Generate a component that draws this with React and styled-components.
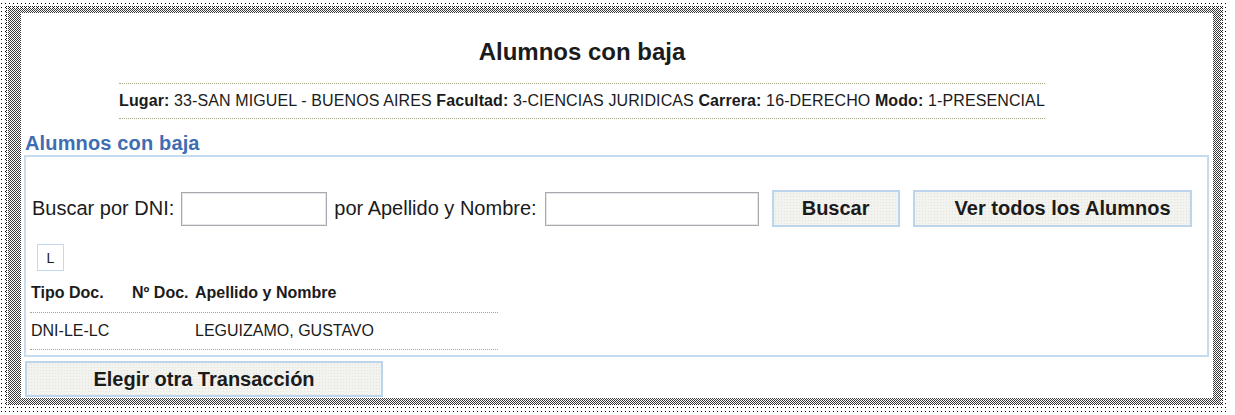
import React from "react";
import styled, { createGlobalStyle } from "styled-components";

const Global = createGlobalStyle`
  html, body { margin: 0; padding: 0; background: #fff; }
  body { font-family: "Liberation Sans", Arial, sans-serif; color: #1b1b1b; }
  * { box-sizing: border-box; }
`;

const dot = (c) => `conic-gradient(at 1px 1px, transparent 75%, ${c} 0)`;

const Page = styled.div`
  width: 1235px;
  height: 415px;
  background: #fff;
  overflow: hidden;
  padding: 3px 0 0 1px;
`;

const SparseFrame = styled.div`
  width: 1226px;
  height: 411px;
  padding: 3px 4px 8px 5px;
  background: ${dot("#000")} 0 0 / 4px 4px;
`;

const MediumFrame = styled.div`
  width: 100%;
  height: 100%;
  padding: 2px;
  background: ${dot("#222")} 0 0 / 2px 2px;
`;

const DenseFrame = styled.div`
  width: 100%;
  height: 100%;
  padding: 5px 8px 6px 13px;
  background: ${dot("#3a3a3a")} 0 0 / 2px 2px, ${dot("#3a3a3a")} 1px 1px / 2px 2px, #fff;
`;

const Content = styled.div`
  width: 100%;
  height: 100%;
  background: #fff;
  display: flex;
  flex-direction: column;
  align-items: flex-start;
`;

const Header = styled.div`
  margin-left: 98px;
  width: 926px;
`;

const Title = styled.h1`
  margin: 25px 0 0;
  font-size: 24px;
  line-height: 28px;
  font-weight: bold;
  text-align: center;
`;

const InfoBar = styled.div`
  margin-top: 17px;
  border-top: 1px dotted #a8a887;
  border-bottom: 1px dotted #a8a887;
  padding: 7px 0 7px;
  font-size: 16px;
  line-height: 20px;
  letter-spacing: 0.11px;
  text-align: center;
  white-space: nowrap;
`;

const Key = styled.b`
  font-weight: bold;
`;

const SectionHeading = styled.h2`
  margin: 12px 0 0 4px;
  font-size: 20px;
  line-height: 24px;
  font-weight: bold;
  letter-spacing: 0.15px;
  color: #3e6db3;
`;

const Box = styled.div`
  margin: 0 0 0 3px;
  width: 1185px;
  border: 2px solid #c6dcef;
  padding: 0 0 5px;
  display: flex;
  flex-direction: column;
  align-items: flex-start;
`;

const SearchRow = styled.div`
  margin-top: 33px;
  padding-left: 6px;
  height: 37px;
  display: flex;
  align-items: center;
  font-size: 20px;
  white-space: nowrap;
`;

const Label = styled.span`
  margin-left: ${(p) => p.$gap || 0}px;
`;

const TextInput = styled.input`
  margin-left: ${(p) => p.$gap}px;
  width: ${(p) => p.$w}px;
  height: 34px;
  border: 1px solid #a6abb2;
  box-shadow: inset 0 0 0 1px #e6e6e6;
  background: #fff;
  outline: none;
  padding: 0 4px;
  font: inherit;
`;

const Button = styled.button`
  margin: ${(p) => p.$margin || "0"};
  width: ${(p) => p.$w}px;
  height: ${(p) => p.$h || 37}px;
  padding: 0 0 0 ${(p) => p.$pl || 0}px;
  text-align: ${(p) => (p.$pl ? "left" : "center")};
  border: 2px solid #bcd5ec;
  background-color: #f2f2ee;
  background-image: radial-gradient(#e4e4de 0.6px, transparent 0.8px);
  background-size: 3px 3px;
  font-family: "Liberation Sans", Arial, sans-serif;
  font-size: 20px;
  font-weight: bold;
  color: #1b1b1b;
  cursor: pointer;
`;

const LetterButton = styled.button`
  margin: 17px 0 0 11px;
  width: 27px;
  height: 27px;
  padding: 0;
  border: 1px solid #c3d9ee;
  background: #fff;
  font-family: "Liberation Sans", Arial, sans-serif;
  font-size: 14px;
  color: #1b1b1b;
`;

const Table = styled.div`
  margin: 5px 0 0 4px;
  width: 468px;
`;

const Row = styled.div`
  display: grid;
  grid-template-columns: 101px 63px 1fr;
  padding: ${(p) => (p.$head ? "7px 0 9px" : "8px 0 8px")};
  line-height: 20px;
  font-size: 16px;
  font-weight: ${(p) => (p.$head ? "bold" : "normal")};
  border-bottom: 1px dotted #a8a887;
  white-space: nowrap;
`;

const Cell = styled.span`
  padding-left: 1px;
`;

export default function App() {
  return (
    <>
      <Global />
      <Page>
        <SparseFrame>
          <MediumFrame>
            <DenseFrame>
              <Content>
                <Header>
                  <Title>Alumnos con baja</Title>
                  <InfoBar>
                    <Key>Lugar:</Key> 33-SAN MIGUEL - BUENOS AIRES <Key>Facultad:</Key> 3-CIENCIAS JURIDICAS{" "}
                    <Key>Carrera:</Key> 16-DERECHO <Key>Modo:</Key> 1-PRESENCIAL
                  </InfoBar>
                </Header>
                <SectionHeading>Alumnos con baja</SectionHeading>
                <Box>
                  <SearchRow>
                    <Label>Buscar por DNI:</Label>
                    <TextInput $gap={7} $w={146} />
                    <Label $gap={7}>por Apellido y Nombre:</Label>
                    <TextInput $gap={8} $w={214} />
                    <Button $margin="0 0 0 13px" $w={128}>Buscar</Button>
                    <Button $margin="0 0 0 13px" $w={279} $pl={40}>Ver todos los Alumnos</Button>
                  </SearchRow>
                  <LetterButton>L</LetterButton>
                  <Table>
                    <Row $head>
                      <Cell>Tipo Doc.</Cell>
                      <Cell>Nº Doc.</Cell>
                      <Cell>Apellido y Nombre</Cell>
                    </Row>
                    <Row>
                      <Cell>DNI-LE-LC</Cell>
                      <Cell></Cell>
                      <Cell>LEGUIZAMO, GUSTAVO</Cell>
                    </Row>
                  </Table>
                </Box>
                <Button $margin="4px 0 0 4px" $w={358} $h={36}>Elegir otra Transacción</Button>
              </Content>
            </DenseFrame>
          </MediumFrame>
        </SparseFrame>
      </Page>
    </>
  );
}
